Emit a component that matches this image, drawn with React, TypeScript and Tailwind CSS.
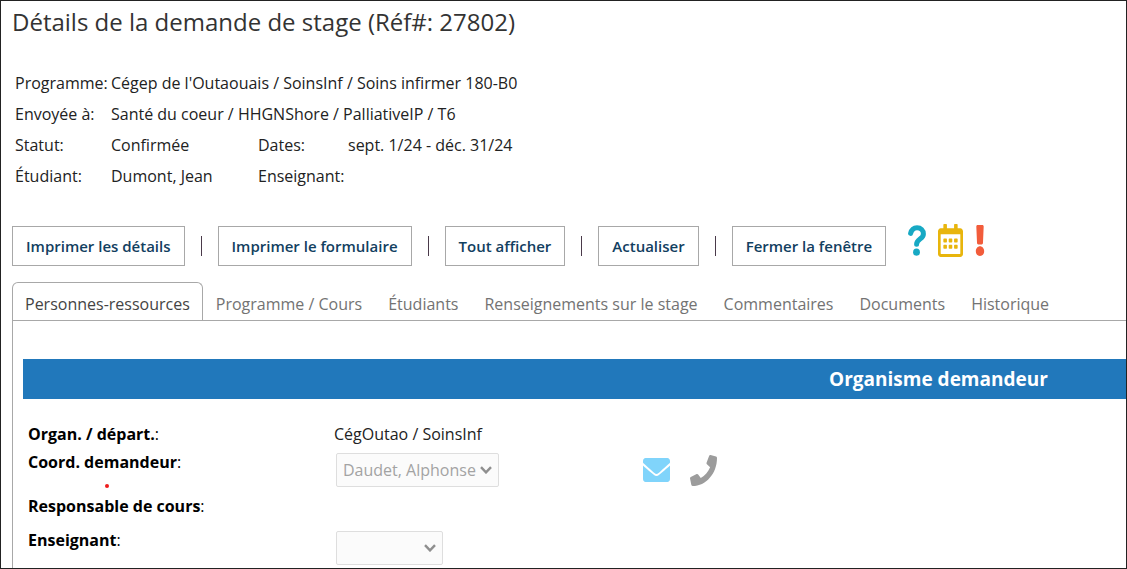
import { useState } from 'react';
import { FaRegCalendarAlt, FaExclamation, FaEnvelope, FaPhone } from 'react-icons/fa';

const ACTIONS = [
  'Imprimer les détails',
  'Imprimer le formulaire',
  'Tout afficher',
  'Actualiser',
  'Fermer la fenêtre',
];

const TABS = [
  'Personnes-ressources',
  'Programme / Cours',
  'Étudiants',
  'Renseignements sur le stage',
  'Commentaires',
  'Documents',
  'Historique',
];

function HelpIcon() {
  return (
    <svg viewBox="0 0 18 31" className="h-[31px] w-[18px] text-[#17a9c4]" fill="none">
      <path
        d="M2.6 8.4C3.6 4.4 6 2.7 9 2.7c3.8 0 6.4 2.6 6.4 6.2 0 5.2-6.8 5.2-6.8 10.4"
        stroke="currentColor"
        strokeWidth="5"
        strokeLinecap="round"
      />
      <ellipse cx="8.5" cy="27.2" rx="3.4" ry="3.6" fill="currentColor" />
    </svg>
  );
}

function Chevron() {
  return (
    <svg
      viewBox="0 0 12 8"
      className="pointer-events-none absolute right-[7px] top-[13px] h-2 w-3"
      fill="none"
      stroke="#8f8f8f"
      strokeWidth="2.4"
    >
      <path d="M1 1.2 6 6.4 11 1.2" />
    </svg>
  );
}

function Summary() {
  return (
    <dl className="mt-[27px] grid grid-cols-[96px_147px_90px_1fr] pl-[3px] text-[16px] leading-[31px] text-[#222]">
      <dt className="whitespace-nowrap">Programme:</dt>
      <dd className="col-span-3">Cégep de l'Outaouais / SoinsInf / Soins infirmer 180-B0</dd>
      <dt>Envoyée à:</dt>
      <dd className="col-span-3">Santé du coeur / HHGNShore / PalliativeIP / T6</dd>
      <dt>Statut:</dt>
      <dd>Confirmée</dd>
      <dt>Dates:</dt>
      <dd>sept. 1/24 - déc. 31/24</dd>
      <dt>Étudiant:</dt>
      <dd>Dumont, Jean</dd>
      <dt>Enseignant:</dt>
      <dd></dd>
    </dl>
  );
}

function Toolbar() {
  return (
    <div className="mt-[34px] flex h-10 items-center">
      {ACTIONS.map((label, i) => (
        <div key={label} className="flex items-center">
          {i > 0 && <span className="mx-4 h-5 w-px bg-[#4a3a4a]" />}
          <button className="h-10 whitespace-nowrap border border-[#a8a8a8] px-[13px] text-[15px] font-semibold text-[#12405f]">
            {label}
          </button>
        </div>
      ))}
      <div className="mb-3 ml-[22px] flex items-center gap-3">
        <button aria-label="Aide">
          <HelpIcon />
        </button>
        <button aria-label="Calendrier">
          <FaRegCalendarAlt preserveAspectRatio="none" className="h-[33px] w-[25px] text-[#e8b50c]" />
        </button>
        <button aria-label="Avertissement">
          <FaExclamation preserveAspectRatio="none" className="h-[31px] w-[10px] text-[#f25c3b]" />
        </button>
      </div>
    </div>
  );
}

export default function App() {
  const [active, setActive] = useState(TABS[0]);

  return (
    <div className="flex min-h-screen flex-col overflow-hidden border border-[#222] bg-white pl-[11px] font-['Open_Sans','Noto_Sans',sans-serif]">
      <h1 className="pt-0.5 text-[24px] leading-[38px] text-[#333]">
        Détails de la demande de stage (Réf#: 27802)
      </h1>
      <Summary />
      <Toolbar />

      <div role="tablist" className="mt-4 flex border-b border-[#a8a8a8]">
        {TABS.map((tab) => (
          <button
            key={tab}
            role="tab"
            aria-selected={tab === active}
            onClick={() => setActive(tab)}
            className={`h-[38px] whitespace-nowrap px-3 pt-1 text-[16px] ${
              tab === active
                ? 'rounded-t-md border border-b-0 border-[#a8a8a8] text-[#444]'
                : 'border border-b-0 border-transparent text-[#737373]'
            }`}
          >
            {tab}
          </button>
        ))}
      </div>

      <section className="grow border-l border-[#a8a8a8] pl-[10px] pt-[38px]">
        <div className="overflow-hidden bg-[#2178bb]">
          <h2 className="w-[166%] text-center text-[19px] font-bold leading-10 text-white">
            Organisme demandeur
          </h2>
        </div>

        <div className="grid grid-cols-[306px_309px_1fr] grid-rows-[28px_44px_34px_40px] pl-[5px] pt-[21px] text-[16px] leading-7 text-[#222]">
          <div className="text-black">
            <b>Organ. / départ.</b>:
          </div>
          <div className="col-span-2">CégOutao / SoinsInf</div>

          <div className="relative text-black">
            <label htmlFor="coord">
              <b>Coord. demandeur</b>:
            </label>
            <span className="absolute left-[77px] top-9 size-1 rounded-full bg-[#ee1c1c]" />
          </div>
          <div className="pl-0.5 pt-[5px]">
            <div className="relative w-[163px]">
              <select
                id="coord"
                disabled
                className="h-[34px] w-full appearance-none rounded-xs border border-[#dedede] bg-[#fbfbfb] pl-[6px] text-[16px] text-[#a3a3a3]"
              >
                <option>Daudet, Alphonse</option>
              </select>
              <Chevron />
            </div>
          </div>
          <div className="flex h-11 items-center gap-5">
            <button aria-label="Courriel">
              <FaEnvelope preserveAspectRatio="none" className="h-8 w-[27px] text-[#80d4fb]" />
            </button>
            <button aria-label="Téléphone">
              <FaPhone preserveAspectRatio="none" className="h-[31px] w-[27px] text-[#9c9c9c]" />
            </button>
          </div>

          <div className="col-span-3 text-black">
            <b>Responsable de cours</b>:
          </div>

          <label htmlFor="enseignant" className="text-black">
            <b>Enseignant</b>:
          </label>
          <div className="pl-0.5 pt-[5px]">
            <div className="relative w-[107px]">
              <select
                id="enseignant"
                disabled
                className="h-[34px] w-full appearance-none rounded-xs border border-[#dedede] bg-[#fbfbfb] pl-[6px] text-[16px] text-[#a3a3a3]"
              >
                <option></option>
              </select>
              <Chevron />
            </div>
          </div>
        </div>
      </section>
    </div>
  );
}
